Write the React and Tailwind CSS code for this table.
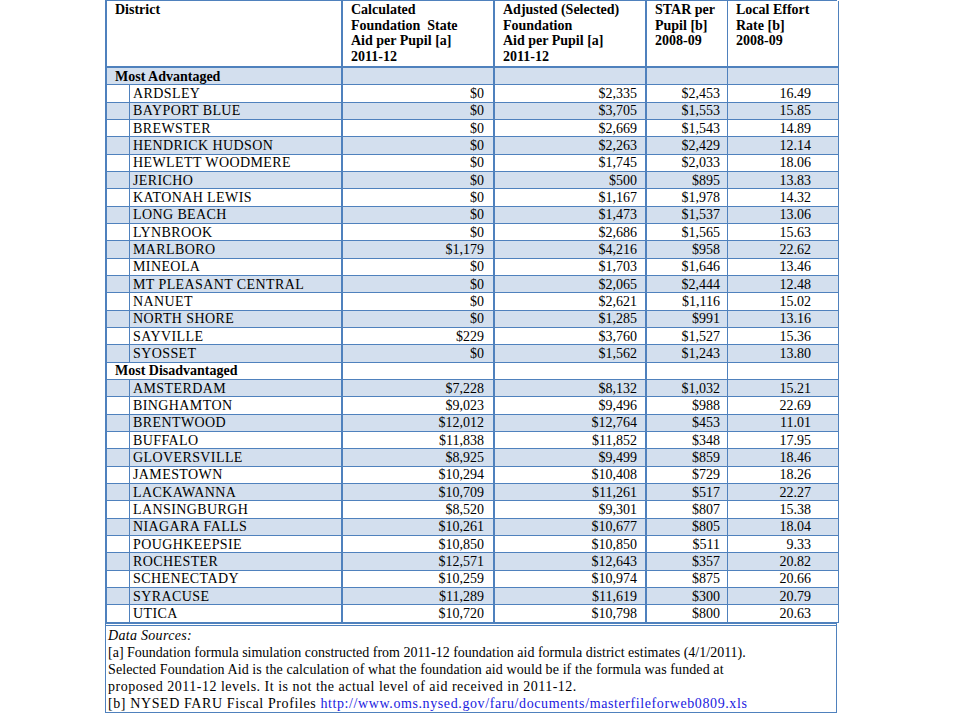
import React from "react";

const adv = [
  ["ARDSLEY", "$0", "$2,335", "$2,453", "16.49"],
  ["BAYPORT BLUE", "$0", "$3,705", "$1,553", "15.85"],
  ["BREWSTER", "$0", "$2,669", "$1,543", "14.89"],
  ["HENDRICK HUDSON", "$0", "$2,263", "$2,429", "12.14"],
  ["HEWLETT WOODMERE", "$0", "$1,745", "$2,033", "18.06"],
  ["JERICHO", "$0", "$500", "$895", "13.83"],
  ["KATONAH LEWIS", "$0", "$1,167", "$1,978", "14.32"],
  ["LONG BEACH", "$0", "$1,473", "$1,537", "13.06"],
  ["LYNBROOK", "$0", "$2,686", "$1,565", "15.63"],
  ["MARLBORO", "$1,179", "$4,216", "$958", "22.62"],
  ["MINEOLA", "$0", "$1,703", "$1,646", "13.46"],
  ["MT PLEASANT CENTRAL", "$0", "$2,065", "$2,444", "12.48"],
  ["NANUET", "$0", "$2,621", "$1,116", "15.02"],
  ["NORTH SHORE", "$0", "$1,285", "$991", "13.16"],
  ["SAYVILLE", "$229", "$3,760", "$1,527", "15.36"],
  ["SYOSSET", "$0", "$1,562", "$1,243", "13.80"],
];

const dis = [
  ["AMSTERDAM", "$7,228", "$8,132", "$1,032", "15.21"],
  ["BINGHAMTON", "$9,023", "$9,496", "$988", "22.69"],
  ["BRENTWOOD", "$12,012", "$12,764", "$453", "11.01"],
  ["BUFFALO", "$11,838", "$11,852", "$348", "17.95"],
  ["GLOVERSVILLE", "$8,925", "$9,499", "$859", "18.46"],
  ["JAMESTOWN", "$10,294", "$10,408", "$729", "18.26"],
  ["LACKAWANNA", "$10,709", "$11,261", "$517", "22.27"],
  ["LANSINGBURGH", "$8,520", "$9,301", "$807", "15.38"],
  ["NIAGARA FALLS", "$10,261", "$10,677", "$805", "18.04"],
  ["POUGHKEEPSIE", "$10,850", "$10,850", "$511", "9.33"],
  ["ROCHESTER", "$12,571", "$12,643", "$357", "20.82"],
  ["SCHENECTADY", "$10,259", "$10,974", "$875", "20.66"],
  ["SYRACUSE", "$11,289", "$11,619", "$300", "20.79"],
  ["UTICA", "$10,720", "$10,798", "$800", "20.63"],
];

const rows = [
  { section: "Most Advantaged" },
  ...adv.map((d) => ({ d })),
  { section: "Most Disadvantaged" },
  ...dis.map((d) => ({ d })),
];

const cell = "border-b border-[#4f81bd] text-[14px] leading-[17px] flex items-center overflow-hidden whitespace-nowrap";

function Row({ r, k }) {
  const bg = k % 2 === 0 ? "bg-[#d3dfee]" : "bg-white";
  if (r.section) {
    return (
      <>
        <div className={`${cell} ${bg} col-span-2 border-r-2 pl-2 font-bold`}>{r.section}</div>
        <div className={`${cell} ${bg} border-r-2`}></div>
        <div className={`${cell} ${bg} border-r-2`}></div>
        <div className={`${cell} ${bg} border-r`}></div>
        <div className={`${cell} ${bg} border-r`}></div>
      </>
    );
  }
  const [name, a, b, c, e] = r.d;
  return (
    <>
      <div className={`${cell} ${bg} border-r`}></div>
      <div className={`${cell} ${bg} border-r-2 pl-[3px] tracking-[0.4px]`}>{name}</div>
      <div className={`${cell} ${bg} border-r-2 justify-end pr-[9px]`}>{a}</div>
      <div className={`${cell} ${bg} border-r-2 justify-end pr-[8px]`}>{b}</div>
      <div className={`${cell} ${bg} border-r justify-end pr-[7px]`}>{c}</div>
      <div className={`${cell} ${bg} border-r justify-end pr-[27px]`}>{e}</div>
    </>
  );
}

const hcell = "border-b-2 border-[#4f81bd] font-bold text-[14px] leading-[15.5px] pt-[1px] pl-2 bg-white";

export default function App() {
  return (
    <div className="w-[960px] h-[720px] bg-white text-black overflow-hidden" style={{ fontFamily: '"Liberation Serif", "Times New Roman", serif' }}>
      <div className="ml-[105px] w-[732px]">
        <div className="grid grid-cols-[23px_213px_152px_152px_81px_111px] grid-rows-[67px_repeat(32,17.34px)] border-l-2 border-t border-[#4f81bd]">
          <div className={`${hcell} col-span-2 border-r-2`}>District</div>
          <div className={`${hcell} border-r-2`}>
            Calculated<br />Foundation&nbsp; State<br />Aid per Pupil [a]<br />2011-12
          </div>
          <div className={`${hcell} border-r-2`}>
            Adjusted (Selected)<br />Foundation<br />Aid per Pupil [a]<br />2011-12
          </div>
          <div className={`${hcell} border-r`}>
            STAR per<br />Pupil [b]<br />2008-09
          </div>
          <div className={`${hcell} border-r`}>
            Local Effort<br />Rate [b]<br />2008-09
          </div>
          {rows.map((r, k) => (
            <Row key={k} r={r} k={k} />
          ))}
        </div>
        <div className="border-l border-r border-b border-t-[3px] border-double border-[#4f81bd] h-[90px] pl-[2px] pt-[1px] text-[14px] leading-[17px] whitespace-nowrap">
          <div className="italic tracking-[0.3px]">Data Sources:</div>
          <div>[a] Foundation formula simulation constructed from 2011-12 foundation aid formula district estimates (4/1/2011).</div>
          <div className="tracking-[0.1px]">Selected Foundation Aid is the calculation of what the foundation aid would be if the formula was funded at</div>
          <div className="tracking-[0.5px]">proposed 2011-12 levels. It is not the actual level of aid received in 2011-12.</div>
          <div className="tracking-[0.6px]">
            [b] NYSED FARU Fiscal Profiles{" "}
            <span className="text-[#1a1ae0]">http://www.oms.nysed.gov/faru/documents/masterfileforweb0809.xls</span>
          </div>
        </div>
      </div>
    </div>
  );
}
